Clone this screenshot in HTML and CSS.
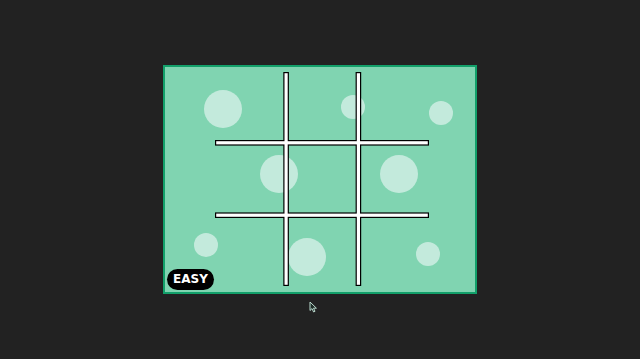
FILE: index.html
```html
<!DOCTYPE html>
<html lang="en">
<head>
    <meta charset="UTF-8">
    <meta name="viewport" content="width=device-width, initial-scale=1.0">
    <title>Tic Tac Toe</title>
    <link rel="stylesheet" href="styles.css">
</head>
<body>
    <div class="board">
        <!-- bule decorative -->
        <span class="bubble big" style="left:39px; top:23px;"></span>
        <span class="bubble big" style="left:95px; top:88px;"></span>
        <span class="bubble small" style="left:176px; top:28px;"></span>
        <span class="bubble small" style="left:264px; top:34px;"></span>
        <span class="bubble big" style="left:215px; top:88px;"></span>
        <span class="bubble small" style="left:29px; top:166px;"></span>
        <span class="bubble big" style="left:123px; top:171px;"></span>
        <span class="bubble small" style="left:251px; top:175px;"></span>

        <svg class="grid" width="214" height="214" viewBox="0 0 214 214">
            <g fill="#000">
                <rect x="68.3" y="0" width="5.6" height="214"/>
                <rect x="140.6" y="0" width="5.6" height="214"/>
                <rect x="0" y="68" width="214" height="5.6"/>
                <rect x="0" y="140.4" width="214" height="5.6"/>
            </g>
            <g fill="#fff">
                <rect x="69.5" y="1.2" width="3.2" height="211.6"/>
                <rect x="141.8" y="1.2" width="3.2" height="211.6"/>
                <rect x="1.2" y="69.2" width="211.6" height="3.2"/>
                <rect x="1.2" y="141.6" width="211.6" height="3.2"/>
            </g>
        </svg>

        <div class="level">EASY</div>
    </div>

    <svg class="cursor" width="9" height="12" viewBox="0 0 9 12">
        <path d="M1 1 L1 9.5 L3 7.6 L4.6 11 L6 10.3 L4.5 7.2 L7.4 7.2 Z" fill="#1d2b26" stroke="#b9d8cc" stroke-width="1"/>
    </svg>
</body>
</html>
```

FILE: styles.css
```css
body {
    margin: 0;
    height: 100vh;
    background-color: #222222;
    font-family: "Liberation Sans", Arial, sans-serif;
    display: flex;
    justify-content: center;
    align-items: center;
    overflow: hidden;
}

.board {
    position: relative;
    width: 310px;
    height: 225px;
    background-color: #80d4b1;
    border: 2px solid #12a06a;
    display: flex;
    justify-content: center;
    align-items: center;
    margin-top: -1px;
}

.bubble {
    position: absolute;
    border-radius: 50%;
    background-color: #c3eadc;
}

.bubble.big {
    width: 38px;
    height: 38px;
}

.bubble.small {
    width: 24px;
    height: 24px;
}

.grid {
    position: relative;
    display: block;
    margin-left: 4px;
    margin-top: 0;
}

.level {
    position: absolute;
    left: 2px;
    bottom: 2px;
    width: 47px;
    height: 21px;
    border-radius: 11px;
    background-color: #000;
    color: #fff;
    font-family: "DejaVu Sans", sans-serif;
    font-size: 12px;
    font-weight: bold;
    display: flex;
    justify-content: center;
    align-items: center;
}

.cursor {
    position: absolute;
    left: 309px;
    top: 301px;
}
```
